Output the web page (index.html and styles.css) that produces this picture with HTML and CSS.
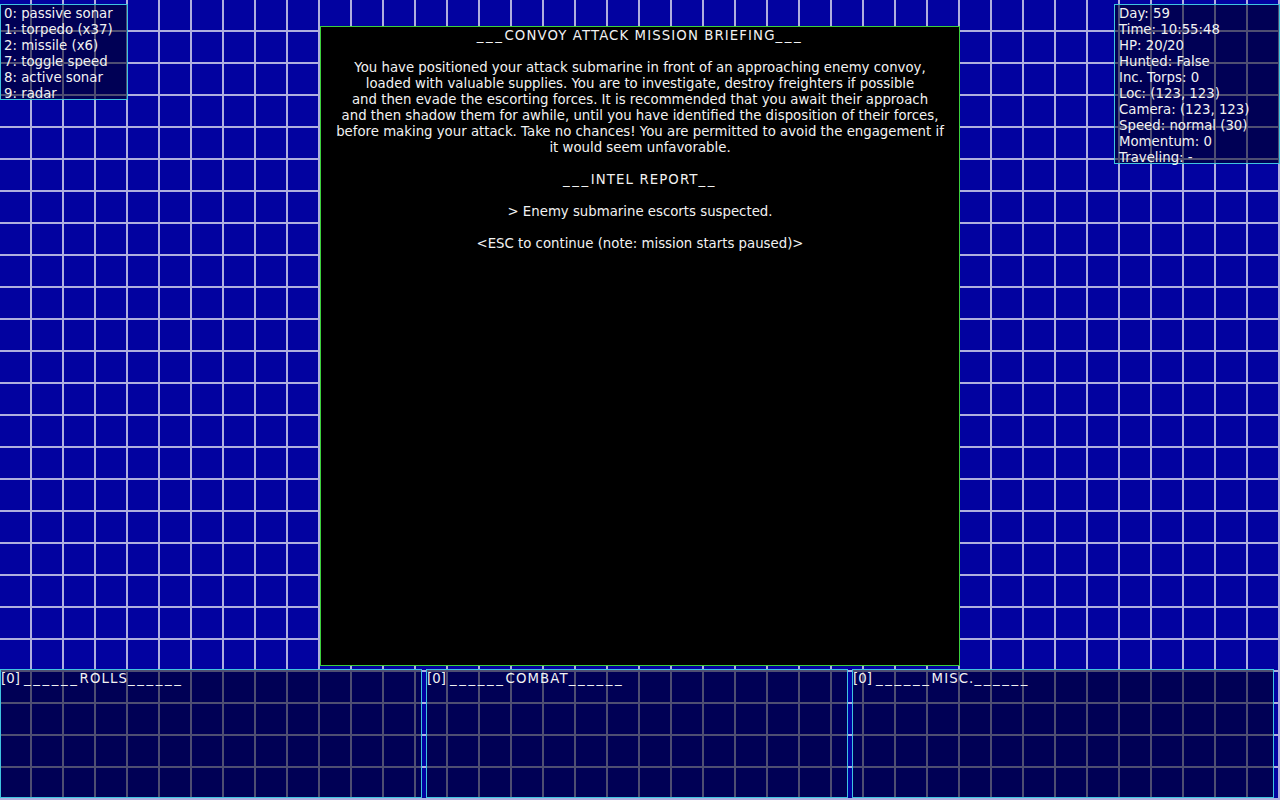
FILE: index.html
```html
<!DOCTYPE html>
<html>
<head>
<meta charset="utf-8">
<link rel="stylesheet" href="styles.css">
</head>
<body>
<div class="screen">
  <div class="panel keys">
    <div>0: passive sonar</div>
    <div>1: torpedo (x37)</div>
    <div>2: missile (x6)</div>
    <div>7: toggle speed</div>
    <div>8: active sonar</div>
    <div>9: radar</div>
  </div>

  <div class="panel status">
    <div>Day: 59</div>
    <div>Time: 10:55:48</div>
    <div>HP: 20/20</div>
    <div>Hunted: False</div>
    <div>Inc. Torps: 0</div>
    <div>Loc: (123, 123)</div>
    <div>Camera: (123, 123)</div>
    <div>Speed: normal (30)</div>
    <div>Momentum: 0</div>
    <div>Traveling: -</div>
  </div>

  <div class="briefing">
    <p><span class="u">___</span><span class="caps">CONVOY ATTACK MISSION BRIEFING</span><span class="u">___</span></p>
    <p>You have positioned your attack submarine in front of an approaching enemy convoy,<br>loaded with valuable supplies. You are to investigate, destroy freighters if possible<br>and then evade the escorting forces. It is recommended that you await their approach<br>and then shadow them for awhile, until you have identified the disposition of their forces,<br>before making your attack. Take no chances! You are permitted to avoid the engagement if<br>it would seem unfavorable.</p>
    <p><span class="u">___</span><span class="caps">INTEL REPORT</span><span class="u">__</span></p>
    <p>&gt; Enemy submarine escorts suspected.</p>
    <p>&lt;ESC to continue (note: mission starts paused)&gt;</p>
  </div>

  <div class="logs">
    <div class="panel log">[0] <span class="u">______</span><span class="caps">ROLLS</span><span class="u">______</span></div>
    <div class="panel log">[0] <span class="u">______</span><span class="caps">COMBAT</span><span class="u">______</span></div>
    <div class="panel log">[0] <span class="u">______</span><span class="caps">MISC.</span><span class="u">______</span></div>
  </div>
</div>
</body>
</html>
```

FILE: styles.css
```css
html, body {
  margin: 0;
  padding: 0;
  background: #0000a0;
}

.screen {
  position: relative;
  width: 1280px;
  height: 800px;
  overflow: hidden;
  background-color: #0202a0;
  background-image:
    linear-gradient(to right, transparent 30px, #aeaedf 30px),
    linear-gradient(to bottom, transparent 30px, #aeaedf 30px);
  background-size: 32px 32px;
  font-family: "DejaVu Sans", sans-serif;
  font-size: 13.3px;
  line-height: 16px;
  color: #f2f2f2;
  white-space: nowrap;
}

.u {
  letter-spacing: 2.6px;
}

.caps {
  letter-spacing: 1.1px;
}

.panel {
  box-sizing: border-box;
  background: rgba(0, 0, 24, 0.55);
  border: 1px solid #3fc4e0;
}

.keys {
  position: absolute;
  left: 0;
  top: 4px;
  width: 128px;
  height: 96px;
  padding: 1px 0 0 3px;
}

.status {
  position: absolute;
  left: 1114px;
  top: 4px;
  width: 166px;
  height: 160px;
  padding: 1px 0 0 4px;
}

.briefing {
  position: absolute;
  left: 320px;
  top: 26px;
  width: 640px;
  height: 640px;
  box-sizing: border-box;
  background: #000;
  border: 1px solid #3ccf3c;
  text-align: center;
  padding-top: 1px;
}

.briefing p {
  margin: 0 0 16px 0;
}

.logs {
  position: absolute;
  left: 0;
  top: 669px;
  display: flex;
  gap: 4px;
}

.log {
  width: 422px;
  height: 129px;
  padding-top: 1px;
}
```
